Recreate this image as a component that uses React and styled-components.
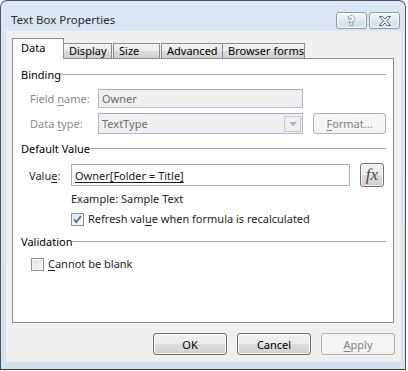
import React from 'react';
import styled, { createGlobalStyle, css } from 'styled-components';

const GlobalStyle = createGlobalStyle`
  html, body {
    margin: 0;
    padding: 0;
    background: #ffffff;
  }
  body {
    font-family: "Noto Sans", "Open Sans", sans-serif;
    font-size: 11px;
    color: #000;
  }
  * { box-sizing: border-box; }
`;

// window chrome
const Window = styled.div`
  width: 406px;
  height: 370px;
  border: 1px solid #4f5357;
  border-bottom-color: #3c3c3c;
  border-radius: 7px 7px 0 0;
  background: linear-gradient(180deg, #dae6f3 0%, #d6e3f1 60%, #d4e1ef 100%);
  display: flex;
  flex-direction: column;
  padding: 0 4px 7px 5px;
`;

const TitleBar = styled.div`
  height: 30px;
  display: flex;
  align-items: flex-start;
  justify-content: space-between;
`;

const Title = styled.div`
  padding: 11px 0 0 5px;
  line-height: 16px;
  font-size: 11.5px;
  color: #2b2b2b;
`;

const CaptionButtons = styled.div`
  display: flex;
  gap: 2px;
  padding-top: 11px;
  padding-right: 1px;
`;

const CaptionButton = styled.div`
  width: 31px;
  height: 17px;
  border: 1px solid #8c99ab;
  border-radius: 3px;
  background: linear-gradient(180deg, #f3f7fb 0%, #e1e9f3 50%, #d3dfec 51%, #dbe5f0 100%);
  box-shadow: inset 0 0 0 1px rgba(255, 255, 255, 0.7);
  display: flex;
  align-items: center;
  justify-content: center;
`;

const HelpGlyph = styled.span`
  font-family: "DejaVu Sans", sans-serif;
  font-weight: bold;
  font-size: 13px;
  line-height: 13px;
  color: #ffffff;
  -webkit-text-stroke: 1px #5a6474;
  paint-order: stroke fill;
`;

const Client = styled.div`
  flex: 1;
  background: #f0f0f0;
  display: flex;
  flex-direction: column;
  padding: 7px 6px 0 6px;
`;

// tabs
const TabStrip = styled.div`
  display: flex;
  align-items: flex-end;
  height: 21px;
  position: relative;
  z-index: 1;
  margin-bottom: -1px;
`;

const Tab = styled.div`
  height: ${p => (p.$active ? '21px' : '16px')};
  width: ${p => p.$w}px;
  margin-left: ${p => p.$gap || 0}px;
  border: 1px solid #898c95;
  border-bottom: ${p => (p.$active ? 'none' : '1px solid #898c95')};
  border-left: ${p => (p.$noLeft ? 'none' : '1px solid #898c95')};
  background: ${p =>
    p.$active ? '#ffffff' : 'linear-gradient(180deg, #f3f3f3 0%, #ebebeb 50%, #dddddd 51%, #cfcfcf 100%)'};
  padding-left: ${p => (p.$active ? 8 : 5)}px;
  line-height: ${p => (p.$active ? '17px' : '14px')};
  white-space: nowrap;
`;

const Panel = styled.div`
  width: 382px;
  height: 265px;
  border: 1px solid #898c95;
  background: #ffffff;
  padding: 8px 7px 0 8px;
  display: flex;
  flex-direction: column;
`;

const GroupHeader = styled.div`
  display: flex;
  align-items: center;
  line-height: 16px;
  margin-top: ${p => p.$mt || 0}px;

  &::after {
    content: "";
    flex: 1;
    height: 1px;
    background: #a7a7a7;
    margin-top: -1px;
  }
`;

const FieldRow = styled.div`
  display: flex;
  align-items: center;
  margin-top: ${p => p.$mt || 0}px;
  height: ${p => p.$h}px;
  padding-left: ${p => p.$indent || 0}px;
`;

const Label = styled.span`
  width: ${p => p.$w}px;
  color: ${p => (p.$disabled ? '#8b8b8b' : '#1e1e1e')};
  flex-shrink: 0;
`;

const Key = styled.span`
  text-decoration: underline;
  text-underline-offset: 2px;
`;

const TextInput = styled.div`
  width: ${p => p.$w}px;
  height: ${p => p.$h}px;
  border: 1px solid ${p => (p.$disabled ? '#a8bdd5' : '#abadb3')};
  border-top-color: ${p => (p.$disabled ? '#98b0cc' : '#a3a6ad')};
  background: ${p => (p.$disabled ? '#f0f0f0' : '#ffffff')};
  color: ${p => (p.$disabled ? '#6d6d6d' : '#1a1a1a')};
  padding-left: 3px;
  display: flex;
  align-items: center;
  justify-content: space-between;
  white-space: nowrap;
`;

const DropArrow = styled.div`
  width: 17px;
  height: 16px;
  margin-right: 1px;
  border: 1px solid #c9c9c9;
  background: #efefef;
  display: flex;
  align-items: center;
  justify-content: center;

  &::before {
    content: "";
    border-left: 4px solid transparent;
    border-right: 4px solid transparent;
    border-top: 4px solid #b0b0b0;
  }
`;

const buttonBase = css`
  height: ${p => p.$h || 22}px;
  width: ${p => p.$w || 74}px;
  border-radius: 3px;
  display: flex;
  align-items: center;
  justify-content: center;
  white-space: nowrap;
`;

const PushButton = styled.div`
  ${buttonBase};
  margin-left: ${p => p.$ml || 0}px;
  ${p =>
    p.$disabled
      ? css`
          border: 1px solid #adb2b5;
          background: #f4f4f4;
          color: #838383;
        `
      : css`
          border: 1px solid #707070;
          background: linear-gradient(180deg, #f2f2f2 0%, #ebebeb 48%, #dddddd 52%, #cfcfcf 100%);
          box-shadow: inset 0 0 0 1px rgba(255, 255, 255, 0.75);
          color: #000;
        `}
`;

const FxText = styled.span`
  font-family: "Liberation Serif", "DejaVu Serif", serif;
  font-style: italic;
  font-size: 17px;
  color: #4a4a4a;
  line-height: 1;
  margin-top: -2px;
`;

const ValueText = styled.span`
  text-decoration: underline;
  text-underline-offset: 2px;
  color: #1a1a1a;
`;

const Line = styled.div`
  line-height: 16px;
  margin-top: ${p => p.$mt || 0}px;
  padding-left: ${p => p.$indent || 0}px;
  color: #1e1e1e;
`;

const CheckRow = styled.label`
  display: flex;
  align-items: center;
  gap: 4px;
  line-height: 16px;
  margin-top: ${p => p.$mt || 0}px;
  padding-left: ${p => p.$indent || 0}px;
  color: #1e1e1e;
`;

const Box = styled.span`
  width: 13px;
  height: 13px;
  border: 1px solid #8f8f8f;
  background: linear-gradient(135deg, #dcdcdc 0%, #f0f0f0 60%, #fbfbfb 100%);
  box-shadow: inset 0 0 0 1px #f4f4f4;
  display: flex;
  align-items: center;
  justify-content: center;
  flex-shrink: 0;
`;

const Footer = styled.div`
  display: flex;
  justify-content: flex-end;
  padding-top: 10px;
`;

const CloseIcon = () => (
  <svg width="14" height="10" viewBox="0 0 14 10">
    <path
      d="M1.5 0.5 H4.5 L7 3 L9.5 0.5 H12.5 L8.5 5 L12.5 9.5 H9.5 L7 7 L4.5 9.5 H1.5 L5.5 5 Z"
      fill="#ffffff"
      stroke="#5a6474"
      strokeWidth="1"
      strokeLinejoin="round"
    />
  </svg>
);

const CheckMark = () => (
  <svg width="11" height="11" viewBox="0 0 11 11">
    <path d="M2 5.5 L4.3 8 L9 2" fill="none" stroke="#4a6fa8" strokeWidth="1.8" />
  </svg>
);

const App = () => (
  <>
    <GlobalStyle />
    <Window>
      <TitleBar>
        <Title>Text Box Properties</Title>
        <CaptionButtons>
          <CaptionButton>
            <HelpGlyph>?</HelpGlyph>
          </CaptionButton>
          <CaptionButton>
            <CloseIcon />
          </CaptionButton>
        </CaptionButtons>
      </TitleBar>
      <Client>
        <TabStrip>
          <Tab $active $w={52}>Data</Tab>
          <Tab $w={48} $noLeft>Display</Tab>
          <Tab $w={47} $gap={1}>Size</Tab>
          <Tab $w={62} $gap={1}>Advanced</Tab>
          <Tab $w={82} $noLeft>Browser forms</Tab>
        </TabStrip>
        <Panel>
          <GroupHeader>Binding</GroupHeader>
          <FieldRow $mt={6} $h={19} $indent={9}>
            <Label $w={68} $disabled>
              Field <Key>n</Key>ame:
            </Label>
            <TextInput $w={205} $h={19} $disabled>Owner</TextInput>
          </FieldRow>
          <FieldRow $mt={5} $h={21} $indent={9}>
            <Label $w={68} $disabled>
              Data <Key>t</Key>ype:
            </Label>
            <TextInput $w={205} $h={21} $disabled>
              TextType
              <DropArrow />
            </TextInput>
            <PushButton $disabled $w={73} $h={21} $ml={10}>
              <span>
                <Key>F</Key>ormat...
              </span>
            </PushButton>
          </FieldRow>

          <GroupHeader $mt={7}>Default Value</GroupHeader>
          <FieldRow $mt={6} $h={24} $indent={8}>
            <Label $w={42}>
              Valu<Key>e</Key>:
            </Label>
            <TextInput $w={279} $h={22}>
              <ValueText>Owner[Folder = Title]</ValueText>
            </TextInput>
            <PushButton $w={24} $h={24} $ml={10}>
              <FxText>fx</FxText>
            </PushButton>
          </FieldRow>
          <Line $mt={4} $indent={50}>Example: Sample Text</Line>
          <CheckRow $mt={4} $indent={50}>
            <Box>
              <CheckMark />
            </Box>
            <span>
              Refresh val<Key>u</Key>e when formula is recalculated
            </span>
          </CheckRow>

          <GroupHeader $mt={7}>Validation</GroupHeader>
          <CheckRow $mt={6} $indent={10}>
            <Box />
            <span>
              <Key>C</Key>annot be blank
            </span>
          </CheckRow>
        </Panel>
        <Footer>
          <PushButton>OK</PushButton>
          <PushButton $ml={10}>Cancel</PushButton>
          <PushButton $ml={10} $disabled>
            <span>
              <Key>A</Key>pply
            </span>
          </PushButton>
        </Footer>
      </Client>
    </Window>
  </>
);

export default App;
